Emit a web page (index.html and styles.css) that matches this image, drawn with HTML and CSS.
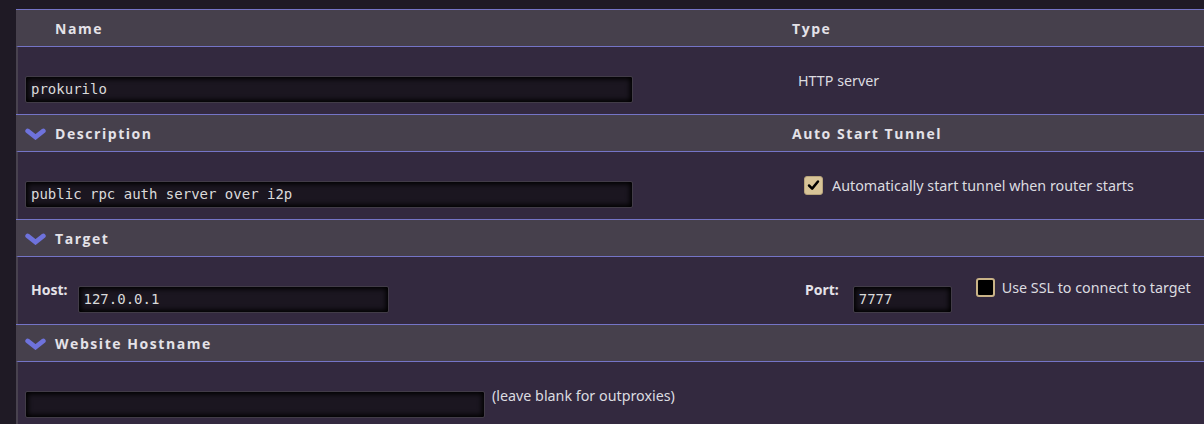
FILE: index.html
```html
<!DOCTYPE html>
<html>
<head>
<meta charset="utf-8">
<link rel="stylesheet" href="styles.css">
</head>
<body>
<div class="panel">
  <div class="row head">
    <div class="c1"><span class="htxt indent">Name</span></div>
    <div class="c2"><span class="htxt">Type</span></div>
  </div>
  <div class="row body">
    <div class="c1 pad-input"><div class="inp w-name">prokurilo</div></div>
    <div class="c2 mid"><span class="txt type-txt">HTTP server</span></div>
  </div>

  <div class="row head">
    <div class="c1"><svg class="chev" viewBox="0 0 20 11"><polyline points="2.5,2.5 10,8.5 17.5,2.5"/></svg><span class="htxt">Description</span></div>
    <div class="c2"><span class="htxt">Auto Start Tunnel</span></div>
  </div>
  <div class="row body">
    <div class="c1 pad-input"><div class="inp w-name">public rpc auth server over i2p</div></div>
    <div class="c2 mid">
      <span class="cb checked"><svg viewBox="0 0 19 19"><polyline points="4.5,9.5 8,13 14.5,5"/></svg></span>
      <span class="txt">Automatically start tunnel when router starts</span>
    </div>
  </div>

  <div class="row head">
    <div class="c1"><svg class="chev" viewBox="0 0 20 11"><polyline points="2.5,2.5 10,8.5 17.5,2.5"/></svg><span class="htxt">Target</span></div>
    <div class="c2"></div>
  </div>
  <div class="row body">
    <div class="c1 target">
      <span class="lbl">Host:</span>
      <div class="inp w-host">127.0.0.1</div>
    </div>
    <div class="c2 target port">
      <span class="lbl">Port:</span>
      <div class="inp w-port">7777</div>
      <span class="ssl"><span class="cb"></span><span class="txt">Use SSL to connect to target</span></span>
    </div>
  </div>

  <div class="row head">
    <div class="c1"><svg class="chev" viewBox="0 0 20 11"><polyline points="2.5,2.5 10,8.5 17.5,2.5"/></svg><span class="htxt">Website Hostname</span></div>
    <div class="c2"></div>
  </div>
  <div class="row body">
    <div class="c1 web">
      <div class="inp w-web"></div>
      <span class="txt note">(leave blank for outproxies)</span>
    </div>
    <div class="c2"></div>
  </div>
</div>
</body>
</html>
```

FILE: styles.css
```css
html, body {
  margin: 0;
  padding: 0;
  background: #1f1a25;
  overflow: hidden;
}
body {
  width: 1204px;
  height: 424px;
  font-family: "Noto Sans", "Open Sans", sans-serif;
  color: #dcdce0;
}
.panel {
  margin-top: 9px;
  margin-left: 16px;
  width: 1188px;
}
.row {
  display: flex;
  border-top: 1px solid #7474c6;
  box-sizing: border-box;
}
.row.head {
  height: 37px;
  background: #46404c;
}
.row.body {
  height: 68px;
  background: #33293f;
  border-left: 2px solid #48424f;
}
.c1 {
  width: 764px;
  flex: none;
  display: flex;
  box-sizing: border-box;
}
.row.body .c1 { width: 762px; }
.c2 {
  flex: 1;
  display: flex;
  box-sizing: border-box;
}
.row.head .c1, .row.head .c2 {
  align-items: center;
}
.row.head .c1 { padding-left: 9px; }
.row.head .c2 { padding-left: 12px; }
.htxt {
  font-family: "Open Sans", "Noto Sans", sans-serif;
  font-weight: 700;
  font-size: 14px;
  letter-spacing: 1.55px;
  color: #e4e2e8;
}
.htxt.indent { margin-left: 30px; }
.chev {
  width: 21px;
  height: 12px;
  margin-right: 9px;
  margin-top: 1px;
}
.chev polyline {
  fill: none;
  stroke: #6e72dc;
  stroke-width: 4.4;
  stroke-linecap: round;
  stroke-linejoin: miter;
}
.txt {
  font-size: 14.3px;
  color: #dcdce0;
}
.pad-input {
  padding-left: 7px;
  padding-top: 29px;
}
.mid {
  align-items: center;
  padding-left: 24px;
}
.type-txt { margin-left: -6px; }
.inp {
  box-sizing: border-box;
  height: 27px;
  background: #1b1620;
  border: 1px solid #423c48;
  border-radius: 2px;
  box-shadow: inset 0 0 5px 2px #000;
  font-family: "DejaVu Sans Mono", "Liberation Mono", monospace;
  font-size: 14px;
  color: #dadada;
  padding: 0 5px;
  line-height: 25px;
  white-space: nowrap;
}
.w-name { width: 608px; }
.w-host { width: 311px; }
.w-port { width: 99px; }
.w-web { width: 460px; }
.cb {
  box-sizing: border-box;
  width: 19px;
  height: 19px;
  border-radius: 3px;
  border: 2px solid #c9b387;
  background: #000;
  margin-right: 9px;
  flex: none;
  display: inline-block;
}
.cb.checked {
  background: #d8c498;
  border: 1px solid #b8a47c;
  display: inline-flex;
  align-items: center;
  justify-content: center;
}
.cb.checked svg { width: 17px; height: 17px; }
.cb.checked polyline {
  fill: none;
  stroke: #000;
  stroke-width: 2.8;
  stroke-linecap: round;
  stroke-linejoin: round;
}
.target {
  align-items: flex-start;
  padding-top: 24px;
}
.row.body .c1.target { padding-left: 13px; }
.lbl {
  font-weight: 700;
  font-size: 14px;
  color: #e4e2e8;
  margin-right: 10px;
  line-height: 18px;
}
.target .inp { margin-top: 5px; }
.port { padding-left: 25px; }
.port .lbl { margin-right: 14px; }
.ssl {
  display: flex;
  align-items: center;
  margin-left: 24px;
  margin-top: -3px;
}
.ssl .cb { width: 19px; height: 19px; margin-right: 7px; }
.web {
  align-items: flex-start;
  padding-left: 7px;
  padding-top: 29px;
}
.note {
  margin-left: 7px;
  margin-top: -5px;
  line-height: 20px;
}
```
